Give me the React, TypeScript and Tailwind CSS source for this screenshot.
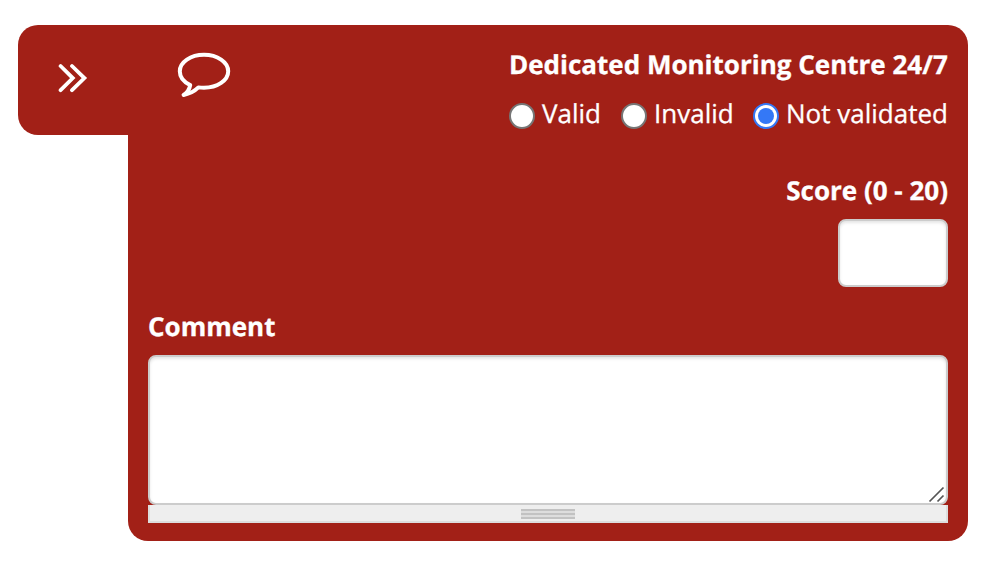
const textBase = "whitespace-nowrap text-[26px] leading-[38px] h-10 text-white [-webkit-text-stroke:0.3px_white]";

function Option({ label, checked = false, className }: { label: string; checked?: boolean; className: string }) {
  return (
    <label className={`flex h-10 items-start ${className}`}>
      {checked ? (
        <span className="mt-[9px] flex size-[26px] shrink-0 items-center justify-center rounded-full border-2 border-[#3478f6] bg-white">
          <span className="size-4 rounded-full bg-[#3478f6]" />
        </span>
      ) : (
        <span className="mt-[9px] size-[26px] shrink-0 rounded-full border-2 border-[#767676] bg-white" />
      )}
      <span className={`ml-[7px] ${textBase}`}>{label}</span>
    </label>
  );
}

export default function App() {
  return (
    <div className="h-[564px] w-[992px] overflow-hidden bg-white pl-[18px] pt-[25px] font-['Open_Sans',sans-serif] [text-rendering:geometricPrecision]">
      <div className="flex items-start">
        <div className="h-[110px] w-[110px] rounded-l-[20px] bg-[#a22017]">
          <svg className="ml-[40px] mt-[38px] h-[30px] w-[30px]" viewBox="0 0 30 30" fill="none" stroke="#fff" strokeWidth="3.8" strokeLinecap="round">
            <path d="M2.6 3 L14.8 15.1 L2.6 27.2 M14 3 L26.4 15.1 L14 27.2" />
          </svg>
        </div>
        <div className="flex h-[516px] w-[840px] flex-col rounded-r-[20px] rounded-bl-[20px] bg-[#a22017] px-5">
          <div className="flex h-[130px] justify-between">
            <svg className="ml-[29px] mt-[26px] h-[48px] w-[54px]" viewBox="0 0 54 48" fill="none" stroke="#fff" strokeWidth="4" strokeLinejoin="round">
              <path d="M27 3.8 C13.6 3.8 2.8 11.2 2.8 20.3 C2.8 26 6.9 31.1 13.2 34.1 C12.4 38.8 9.6 42 6.6 44 C13.2 42.6 17.8 40 21.4 36.4 C23.2 36.7 25.1 36.8 27 36.8 C40.4 36.8 51.2 29.4 51.2 20.3 C51.2 11.2 40.4 3.8 27 3.8 Z" />
            </svg>
            <div className="flex w-[439px] flex-col pt-[20px]">
              <div className={`${textBase} font-bold`}>Dedicated Monitoring Centre 24/7</div>
              <div className="mt-[9px] flex">
                <Option label="Valid" className="w-[112px]" />
                <Option label="Invalid" className="w-[132px]" />
                <Option label="Not validated" checked className="w-[195px]" />
              </div>
            </div>
          </div>
          <div className="mt-4 flex flex-col items-end">
            <div className={`${textBase} font-bold`}>Score (0 - 20)</div>
            <input aria-label="Score" className="mt-[8px] h-[68px] w-[110px] rounded-lg border-2 border-[#ccc] bg-white shadow-[inset_0_2px_3px_rgba(0,0,0,0.1)]" />
          </div>
          <div className={`mt-[20px] ${textBase} font-bold`}>Comment</div>
          <div className="mt-[8px] flex h-[150px] items-end justify-end rounded-lg border-2 border-[#ccc] bg-white shadow-[inset_0_2px_3px_rgba(0,0,0,0.1)]">
            <svg className="mr-[1px] size-[17px]" viewBox="0 0 17 17" fill="none" stroke="#555" strokeWidth="1.7">
              <path d="M1.5 15.5 L15.5 1.5 M9.5 15.5 L15.5 9.5" />
            </svg>
          </div>
          <div className="flex h-[18px] shrink-0 justify-center border-x-2 border-b-2 border-[#ddd] bg-[#eee]">
            <div className="mt-1 flex h-[10px] w-[54px] flex-col justify-between bg-[#ddd]">
              <span className="h-[2px] bg-[#c2c2c2]" />
              <span className="h-[2px] bg-[#c2c2c2]" />
              <span className="h-[2px] bg-[#c2c2c2]" />
            </div>
          </div>
        </div>
      </div>
    </div>
  );
}
